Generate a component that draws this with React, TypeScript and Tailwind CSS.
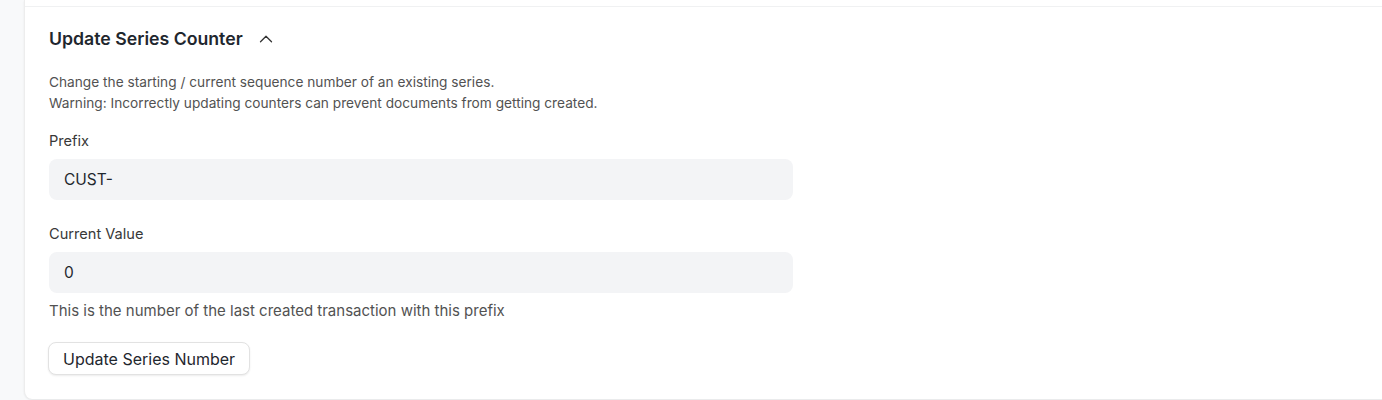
import { ChevronUp } from 'lucide-react';

export default function App() {
  return (
    <div className="bg-[#f8f9fa] h-[400px] overflow-hidden pl-[24px] font-['Inter',sans-serif] text-[#1f272e]">
      <div className="bg-white h-[399px] -mr-4 rounded-bl-lg border-l border-[#ededed] shadow-[0_1px_2px_rgba(0,0,0,0.08)]">
        <div className="h-[7px] border-b border-[#f0f1f2]"></div>

        <div className="pl-[24px] pt-[20px]">
          <div className="flex items-center gap-[12px]">
            <h2 className="text-[17.7px] leading-[24px] font-semibold">Update Series Counter</h2>
            <ChevronUp className="h-[22px] w-[22px] text-[#333]" strokeWidth={1.4} />
          </div>

          <div className="mt-[21px] text-[13.7px] leading-[21px] text-[#525252]">
            <p>Change the starting / current sequence number of an existing series.</p>
            <p>Warning: Incorrectly updating counters can prevent documents from getting created.</p>
          </div>

          <div className="w-[744px]">
            <label className="block mt-[17px] text-[14.6px] leading-[20px] text-[#383838]">Prefix</label>
            <div className="mt-[8px] h-[41px] rounded-lg bg-[#f3f4f6] px-[15px] flex items-center text-[15.5px]">
              CUST-
            </div>

            <label className="block mt-[24px] text-[14.6px] leading-[20px] text-[#383838]">Current Value</label>
            <div className="mt-[8px] h-[41px] rounded-lg bg-[#f3f4f6] px-[15px] flex items-center text-[15.5px]">
              0
            </div>
            <p className="mt-[8px] text-[15px] leading-[20px] text-[#525252]">
              This is the number of the last created transaction with this prefix
            </p>
          </div>

          <button className="mt-[21px] -ml-px h-[33px] px-[14px] rounded-lg bg-white border border-[#e2e2e2] shadow-[0_1px_2px_rgba(0,0,0,0.08)] text-[16px] text-[#1f272e]">
            Update Series Number
          </button>
        </div>
      </div>
    </div>
  );
}
